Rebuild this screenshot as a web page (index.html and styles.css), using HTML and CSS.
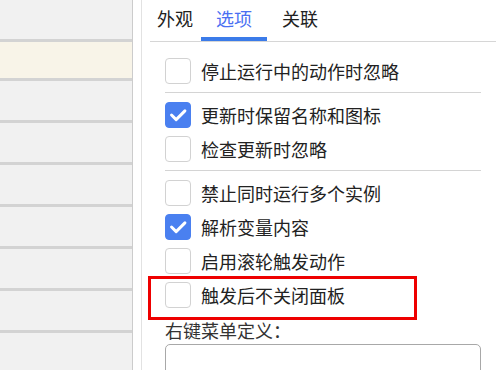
FILE: index.html
```html
<!DOCTYPE html>
<html>
	<head>
		<meta charset="utf-8">
		<link rel="stylesheet" href="styles.css">
	</head>
	<body>

	<div class="list">
		<div class="row"></div>
		<div class="row current"></div>
		<div class="row"></div>
		<div class="row"></div>
		<div class="row"></div>
		<div class="row"></div>
		<div class="row"></div>
		<div class="row"></div>
		<div class="row"></div>
	</div>

	<div class="gap"></div>

	<div class="panel">
		<div class="tabs">
			<div class="tab first">外观</div>
			<div class="tab active">选项</div>
			<div class="tab">关联</div>
		</div>

		<div class="options">
			<label class="option"><span class="box"></span>停止运行中的动作时忽略</label>
			<hr class="sep" />
			<label class="option"><span class="box checked"><svg viewBox="0 0 26 26"><path d="M6 13 L11 18 L20.5 8.5" /></svg></span>更新时保留名称和图标</label>
			<label class="option"><span class="box"></span>检查更新时忽略</label>
			<hr class="sep" />
			<label class="option"><span class="box"></span>禁止同时运行多个实例</label>
			<label class="option"><span class="box checked"><svg viewBox="0 0 26 26"><path d="M6 13 L11 18 L20.5 8.5" /></svg></span>解析变量内容</label>
			<label class="option"><span class="box"></span>启用滚轮触发动作</label>
			<label class="option marked"><span class="box"></span>触发后不关闭面板<span class="mark"></span></label>

			<div class="caption">右键菜单定义：</div>
			<div class="field"></div>
		</div>
	</div>

	</body>
</html>
```

FILE: styles.css
```css
html {
	overflow: hidden;
}

body {
	margin: 0;
	height: 370px;
	overflow: hidden;
	display: flex;
	background-color: white;
	font-family: "Noto Sans CJK SC", "Noto Sans", sans-serif;
	color: #222222;
}

/* left list */
.list {
	width: 132px;
	flex: none;
	overflow: hidden;
	background-color: #f1f1f1;
	border-right: 1px solid #cccccc;
}
.row {
	height: 39px;
	border-bottom: 3px solid #d3d3d3;
}
.row.current {
	height: 36px;
	background-color: #f8f4e8;
}

.gap {
	width: 8px;
	flex: none;
}

/* right panel */
.panel {
	flex: 1;
	height: 370px;
	overflow: hidden;
	border-left: 1px solid #e2e2e2;
	padding-left: 8px;
}

.tabs {
	display: flex;
	height: 41px;
	border-bottom: 1px solid #d6d6d6;
}
.tab {
	box-sizing: border-box;
	height: 41px;
	padding: 6px 15px 0 15px;
	line-height: 24px;
	font-size: 18px;
	border-bottom: 4px solid transparent;
}
.tab.first {
	padding-left: 7px;
	padding-right: 8px;
}
.tab.active {
	color: #4a6ff2;
	border-bottom-color: #3b7be9;
}

.options {
	padding: 12px 15px 0 15px;
}

.option {
	position: relative;
	display: flex;
	align-items: center;
	height: 34px;
	font-size: 18px;
	gap: 10px;
}

.box {
	box-sizing: border-box;
	width: 26px;
	height: 26px;
	flex: none;
	border: 1px solid #d2d2d2;
	border-radius: 4px;
	background-color: white;
}
.box.checked {
	border-color: #4a80f0;
	background-color: #4a80f0;
}
.box svg {
	display: block;
	width: 24px;
	height: 24px;
}
.box svg path {
	fill: none;
	stroke: white;
	stroke-width: 3.2;
	stroke-linecap: round;
	stroke-linejoin: round;
}

.sep {
	border: none;
	border-top: 1px solid #d4d4d4;
	margin: 4px 0 5px 0;
}

/* red annotation frame */
.mark {
	position: absolute;
	left: -17px;
	top: -2px;
	width: 269px;
	height: 44px;
	box-sizing: border-box;
	border: 3px solid #ee0000;
}

.caption {
	margin-top: 6px;
	font-size: 18px;
	line-height: 24px;
	color: #333333;
}

.field {
	margin-top: 2px;
	height: 60px;
	border: 1px solid #a8a8a8;
	border-radius: 5px;
}
```
